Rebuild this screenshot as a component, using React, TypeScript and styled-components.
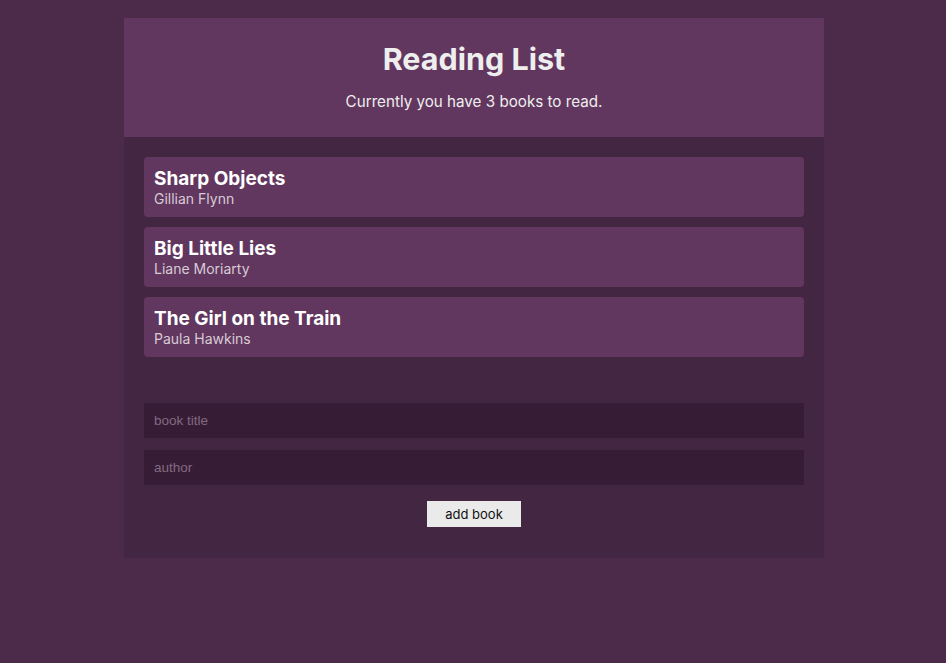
import React, { useState } from "react";
import styled, { createGlobalStyle } from "styled-components";

const Global = createGlobalStyle`
  html, body { margin: 0; padding: 0; background: #4b2a4a; }
  body { font-family: Inter, "Noto Sans", sans-serif; color: #eee; }
  * { box-sizing: border-box; }
`;

const Page = styled.div`
  padding: 18px 0 0 2px;
  display: flex;
  justify-content: center;
  min-height: 663px;
`;

const Container = styled.div`
  width: 700px;
  align-self: flex-start;
  background: #432641;
`;

const Header = styled.header`
  background: #62375f;
  height: 119px;
  padding-top: 22px;
  text-align: center;
`;

const Title = styled.h1`
  margin: 0;
  font-size: 30.5px;
  font-weight: 700;
  line-height: 38px;
  color: #eee;
`;

const Subtitle = styled.p`
  margin: 14px 0 0;
  font-size: 15.2px;
  line-height: 20px;
  color: #eee;
`;

const Body = styled.div`
  padding: 20px 20px 31px;
`;

const List = styled.ul`
  list-style: none;
  margin: 0;
  padding: 0;
  display: flex;
  flex-direction: column;
  gap: 10px;
`;

const Item = styled.li`
  background: #62375f;
  border-radius: 4px;
  height: 60px;
  padding: 11px 10px 9px;
`;

const BookTitle = styled.div`
  font-size: 19px;
  font-weight: 700;
  line-height: 22px;
  color: #fff;
`;

const Author = styled.div`
  font-size: 14px;
  line-height: 17px;
  color: #d6cbd5;
`;

const Form = styled.form`
  margin-top: 46px;
  display: flex;
  flex-direction: column;
  gap: 12px;
`;

const Input = styled.input`
  width: 100%;
  height: 35px;
  border: none;
  background: #361d35;
  padding: 0 10px;
  font-family: "Liberation Sans", Arial, sans-serif;
  font-size: 13.5px;
  color: #eee;
  outline: none;
  &::placeholder { color: #836a81; }
`;

const Button = styled.button`
  align-self: center;
  margin-top: 4px;
  width: 94px;
  height: 26px;
  border: none;
  background: #eaeaea;
  font-family: Inter, "Noto Sans", sans-serif;
  font-size: 13px;
  color: #111;
  cursor: pointer;
`;

const books = [
  { title: "Sharp Objects", author: "Gillian Flynn" },
  { title: "Big Little Lies", author: "Liane Moriarty" },
  { title: "The Girl on the Train", author: "Paula Hawkins" },
];

export default function App() {
  const [t, setT] = useState("");
  const [a, setA] = useState("");
  return (
    <>
      <Global />
      <Page>
        <Container>
          <Header>
            <Title>Reading List</Title>
            <Subtitle>Currently you have {books.length} books to read.</Subtitle>
          </Header>
          <Body>
            <List>
              {books.map((b) => (
                <Item key={b.title}>
                  <BookTitle>{b.title}</BookTitle>
                  <Author>{b.author}</Author>
                </Item>
              ))}
            </List>
            <Form onSubmit={(e) => e.preventDefault()}>
              <Input placeholder="book title" value={t} onChange={(e) => setT(e.target.value)} />
              <Input placeholder="author" value={a} onChange={(e) => setA(e.target.value)} />
              <Button type="submit">add book</Button>
            </Form>
          </Body>
        </Container>
      </Page>
    </>
  );
}
